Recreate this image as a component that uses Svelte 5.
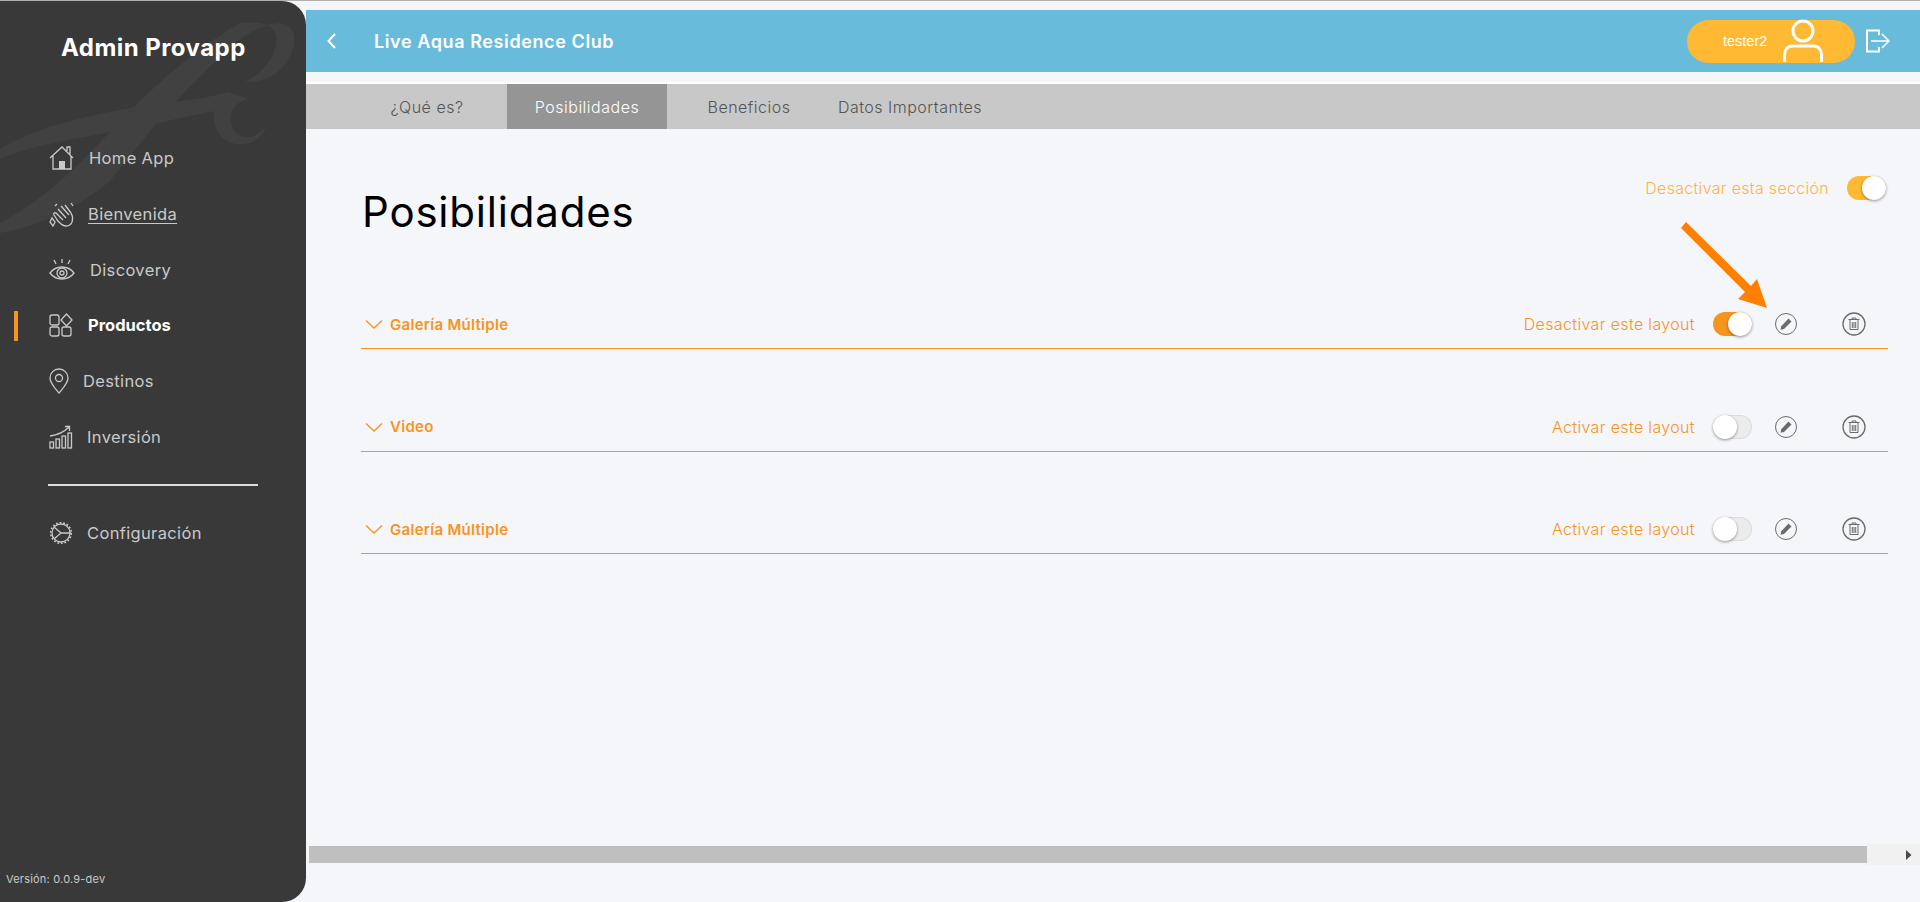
<script>
  const nav = [
    { label: 'Home App', icon: 'home', gap: 14 },
    { label: 'Bienvenida', icon: 'clap', gap: 13, underline: true },
    { label: 'Discovery', icon: 'eye', gap: 15 },
    { label: 'Productos', icon: 'grid', gap: 13, active: true },
    { label: 'Destinos', icon: 'pin', gap: 8 },
    { label: 'Inversión', icon: 'chart', gap: 12 }
  ];

  const tabs = ['¿Qué es?', 'Posibilidades', 'Beneficios', 'Datos Importantes'];

  const rows = [
    { title: 'Galería Múltiple', label: 'Desactivar este layout', on: true },
    { title: 'Video', label: 'Activar este layout', on: false },
    { title: 'Galería Múltiple', label: 'Activar este layout', on: false }
  ];
</script>

{#snippet navIcon(name)}
  <svg class="nav-icon" width="26" height="26" viewBox="0 0 26 26" fill="none" stroke="#c9c9c9" stroke-width="1.3">
    {#if name === 'home'}
      <path d="M1 13 13 2l11 11M4 11v13h18V11M18 6V2h3v7"/>
      <rect x="10" y="16" width="6" height="8" fill="#c9c9c9" stroke="none"/>
    {:else if name === 'clap'}
      <path d="M9 8l8 9M12 5l8 9M16 4l6 8M7 12l7 7M22 12c3 5 2 13-5 13-4 0-6-3-8-5l-4-6c-1-2 1-3 2-2"/>
      <path d="M3 17l3 4-2 4-3-4zM22 2l2 3M6 5l2-2" />
    {:else if name === 'eye'}
      <path d="M1 16c6-8 18-8 24 0-6 8-18 8-24 0z"/>
      <circle cx="13" cy="16" r="5"/><circle cx="13" cy="16" r="2"/>
      <path d="M13 2v4M5 3l2 4M21 3l-2 4"/>
    {:else if name === 'grid'}
      <rect x="1" y="3" width="9" height="10" rx="2"/>
      <rect x="1" y="15" width="9" height="9" rx="2"/>
      <rect x="13" y="15" width="9" height="9" rx="2"/>
      <path d="M17.5 2 23 8l-5.5 6L12 8z"/>
    {:else if name === 'pin'}
      <path d="M10 25C5 19 1 15 1 10a9 9 0 0 1 18 0c0 5-4 9-9 15z"/>
      <circle cx="10" cy="10" r="3.5"/>
    {:else if name === 'chart'}
      <rect x="1" y="18" width="3.5" height="6"/>
      <rect x="7" y="15" width="3.5" height="9"/>
      <rect x="13" y="12" width="3.5" height="12"/>
      <rect x="19" y="9" width="3.5" height="15"/>
      <path d="M1 12C9 11 15 8 20 3M16 2.500h4.500V7"/>
    {:else if name === 'gear'}
      <circle cx="12" cy="13" r="9" stroke-width="1.300"/>
      <circle cx="12" cy="13" r="10.300" stroke-width="1.600" stroke-dasharray="1.800 1.800"/>
      <path d="M5 7l7 6-7 6M12 13h10"/>
    {/if}
  </svg>
{/snippet}

<div class="app">
  <aside class="sidebar">
    <svg class="watermark" width="306" height="260" viewBox="0 0 306 260" fill="#414141">
      <path d="M0 148C30 130 70 118 125 108 165 100 200 100 228 91L248 98C232 102 228 115 232 125 238 140 255 140 266 125 262 140 245 146 232 142 218 138 212 122 214 110 190 115 175 118 150 124L100 133C65 140 30 145 0 158z"/>
      <path d="M0 232C40 226 80 205 110 180 130 155 150 130 167 110 190 85 215 60 235 42 250 30 268 22 280 22 297 26 297 40 290 55 282 72 265 82 245 81 262 72 278 55 276 35 274 24 262 20 240 22 200 45 165 75 130 110 95 145 60 190 0 222z"/>
    </svg>

    <h1 class="brand">Admin Provapp</h1>

    <nav class="nav">
      {#each nav as item}
        <div class="nav-item" class:nav-item--active={item.active}>
          {@render navIcon(item.icon)}
          <span class:nav-link={item.underline} style="margin-left:{item.gap}px">{item.label}</span>
        </div>
      {/each}
    </nav>

    <div class="nav-divider"></div>

    <div class="nav-item">
      {@render navIcon('gear')}
      <span style="margin-left:12px">Configuración</span>
    </div>

    <div class="version">Versión: 0.0.9-dev</div>
  </aside>

  <main class="main">
    <header class="topbar">
      <svg class="back" width="12" height="18" viewBox="0 0 12 18" fill="none" stroke="#fff" stroke-width="2"><path d="M9 2 2.500 9 9 16"/></svg>
      <div class="topbar__title">Live Aqua Residence Club</div>
      <div class="user">
        <span class="user__name">tester2</span>
        <svg class="user__icon" width="42" height="44" viewBox="0 0 42 44" fill="none" stroke="#fff" stroke-width="3">
          <circle cx="21" cy="12" r="10"/>
          <path d="M2.500 43V36c0-5 3-9 8-9h21c5 0 8 4 8 9v7"/>
        </svg>
      </div>
      <svg class="logout" width="26" height="26" viewBox="0 0 26 26" fill="none" stroke="#fff" stroke-width="1.500">
        <path d="M15 7V2.500H3v21h12V19" stroke-width="2"/>
        <path d="M7 13h17M18 6l7 7-7 7"/>
      </svg>
    </header>

    <div class="tabs">
      {#each tabs as tab, i}
        <div class="tab" class:tab--active={i === 1}>{tab}</div>
      {/each}
    </div>

    <section class="content">
      <div class="section-head">
        <h2 class="title">Posibilidades</h2>
        <div class="section-toggle">
          <span>Desactivar esta sección</span>
          <div class="switch switch--amber"><i></i></div>
        </div>
      </div>

      {#each rows as row}
        <div class="row">
          <svg class="row__chevron" width="18" height="10" viewBox="0 0 18 10" fill="none" stroke="#f7941d" stroke-width="1.300"><path d="M1 1.500 9 9l8-7.500"/></svg>
          <div class="row__title">{row.title}</div>
          <div class="row__label">{row.label}</div>
          <div class="switch" class:switch--on={row.on}><i></i></div>
          <svg class="row__edit" width="24" height="24" viewBox="0 0 24 24" fill="none" stroke="#6b6b6b">
            <circle cx="12" cy="12" r="10.500"/>
            <path d="M14.500 6.500 17.500 9.500 10 17l-3.500.8.800-3.500z" fill="#6b6b6b" stroke="none"/>
          </svg>
          <svg class="row__trash" width="24" height="24" viewBox="0 0 24 24" fill="none" stroke="#6b6b6b">
            <circle cx="12" cy="12" r="11" stroke-width="1.300"/>
            <path d="M6.500 7.500h11M10 7.500V6h4v1.500M8 8v9.500h8V8M10.300 10v6M12 10v6M13.700 10v6"/>
          </svg>
        </div>
      {/each}

      <svg class="arrow" width="90" height="90" viewBox="0 0 90 90" fill="#ff8000">
        <path d="M1 8 6 2 71 66 77 59 87 88 58 79 65 72z"/>
      </svg>
    </section>

    <div class="scrollbar">
      <div class="scrollbar__thumb"></div>
      <div class="scrollbar__track">
        <svg width="6" height="10" viewBox="0 0 6 10" fill="#4a4a4a"><path d="M0 0 5.500 5 0 10z"/></svg>
      </div>
    </div>
  </main>
</div>

<style>
  :global(body) {
    background: #f5f6fa;
    font-family: Inter, "Open Sans", sans-serif;
  }

  .app {
    display: flex;
    height: 901px;
    border-top: 1px solid #b0b0b0;
    overflow: hidden;
  }

  /* Sidebar */
  .sidebar {
    position: relative;
    width: 306px;
    flex-shrink: 0;
    display: flex;
    flex-direction: column;
    background: #393939;
    border-radius: 0 24px 24px 0;
    overflow: hidden;
    color: #c9c9c9;
  }
  .watermark { position: absolute; top: 0; left: 0; }

  .brand {
    position: relative;
    margin: 31px 0 0;
    height: 32px;
    padding-left: 61px;
    font-size: 24px;
    line-height: 32px;
    font-weight: 700;
    color: #fff;
    letter-spacing: 0.45px;
  }

  .nav { position: relative; margin-top: 66.500px; }

  .nav-item {
    position: relative;
    display: flex;
    align-items: center;
    height: 55.700px;
    padding-left: 49px;
    font-size: 16.500px;
    letter-spacing: 0.35px;
  }
  .nav-icon { flex-shrink: 0; }
  .nav-link { text-decoration: underline; text-underline-offset: 3px; }

  .nav-item--active { color: #fff; font-weight: 700; letter-spacing: 0; }
  .nav-item--active::before {
    content: '';
    position: absolute;
    left: 14px;
    top: 13px;
    width: 4px;
    height: 30px;
    background: #f7941d;
  }

  .nav-divider {
    position: relative;
    margin: 19px 0 20px 48px;
    width: 210px;
    height: 2px;
    background: #dcdcdc;
  }

  .version {
    position: absolute;
    left: 6px;
    bottom: 16px;
    font-size: 11px;
    letter-spacing: 0.2px;
  }

  /* Main */
  .main {
    position: relative;
    flex: 1;
    min-width: 0;
    display: flex;
    flex-direction: column;
    padding-top: 9px;
  }

  .topbar {
    display: flex;
    align-items: center;
    height: 62px;
    padding-left: 20px;
    background: #69bbdb;
    color: #fff;
  }
  .back { flex-shrink: 0; }
  .topbar__title {
    margin-left: 36px;
    font-size: 18px;
    font-weight: 600;
    letter-spacing: 0.6px;
  }

  .user {
    position: relative;
    display: flex;
    align-items: center;
    width: 168px;
    height: 43px;
    margin-left: auto;
    padding-left: 36px;
    box-sizing: border-box;
    background: #ffb933;
    border-radius: 22px;
  }
  .user__name { font-family: "Liberation Sans", sans-serif; font-size: 14.500px; }
  .user__icon { position: absolute; left: 95px; top: -1px; }

  .logout { margin: 0 30px 0 9px; flex-shrink: 0; }

  .tabs {
    display: grid;
    grid-template-columns: 160px 160px 164px 158px;
    height: 45px;
    margin-top: 10px;
    padding-left: 41px;
    border-top: 2px solid #fff;
    background: #c8c8c8;
    font-size: 16px;
    font-weight: 300;
    color: #555;
  }
  .tab {
    display: flex;
    align-items: center;
    justify-content: center;
    letter-spacing: 0.5px;
    white-space: nowrap;
  }
  .tab--active { background: #959595; color: #fff; }

  .content {
    position: relative;
    flex: 1;
    padding: 0 32px 0 55px;
  }

  .section-head {
    display: flex;
    justify-content: space-between;
    height: 171px;
  }
  .title {
    margin: 56px 0 0 1px;
    font-size: 42px;
    line-height: 54px;
    font-weight: 400;
    color: #000;
    letter-spacing: 0.8px;
  }
  .section-toggle {
    display: flex;
    align-items: center;
    gap: 18px;
    height: 24px;
    margin: 47px 2px 0 0;
    font-size: 16px;
    font-weight: 300;
    color: #ffb340;
    letter-spacing: 0.3px;
  }

  .switch {
    position: relative;
    width: 39px;
    height: 24px;
    flex-shrink: 0;
    border-radius: 12px;
    background: #ececec;
    box-shadow: inset 0 0 0 1px #dcdcdc;
  }
  .switch i {
    position: absolute;
    left: 0;
    top: 0;
    width: 24px;
    height: 24px;
    border-radius: 50%;
    background: #fff;
    box-shadow: 0 1px 3px rgba(0, 0, 0, 0.4);
  }
  .switch--on,
  .switch--amber { box-shadow: none; }
  .switch--on { background: #f7941d; }
  .switch--amber { background: #ffb933; }
  .switch--on i,
  .switch--amber i { left: 15px; }

  .row {
    display: flex;
    align-items: center;
    height: 48px;
    margin-bottom: 53.500px;
    border-bottom: 1px solid #f7941d;
    box-sizing: content-box;
  }
  .row__chevron { margin-left: 4px; flex-shrink: 0; }
  .row__title {
    margin-left: 7px;
    font-size: 15px;
    font-weight: 600;
    color: #f7941d;
    letter-spacing: 0.3px;
  }
  .row__label {
    margin-left: auto;
    font-size: 16px;
    font-weight: 300;
    color: #f7941d;
    letter-spacing: 0.35px;
  }
  .row .switch { margin-left: 18px; }
  .row__edit { margin-left: 22px; flex-shrink: 0; }
  .row__trash { margin: 0 22px 0 44px; flex-shrink: 0; }

  .arrow { position: absolute; left: 1374px; top: 91px; }

  .scrollbar {
    position: absolute;
    left: 0;
    right: 0;
    top: 843px;
    display: flex;
    align-items: center;
    height: 21px;
    padding-left: 3px;
  }
  .scrollbar__thumb { width: 1558px; height: 17px; background: #bfbfbf; }
  .scrollbar__track {
    flex: 1;
    display: flex;
    align-items: center;
    justify-content: flex-end;
    height: 21px;
    padding-right: 8px;
    background: #f1f1f1;
  }
</style>
